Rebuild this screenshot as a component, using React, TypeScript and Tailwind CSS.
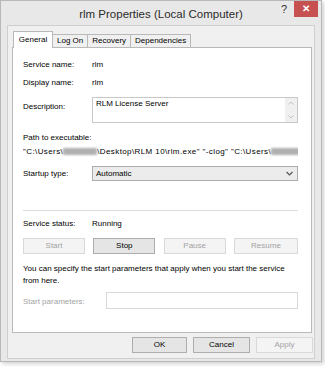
import React from "react";

const tabs = ["General", "Log On", "Recovery", "Dependencies"];

function Blur({ w }: { w: number }) {
  return (
    <span
      className="inline-block h-[7px] bg-[#b0b0b0] blur-[1px] align-middle"
      style={{ width: w }}
    />
  );
}

function Btn({ label, disabled, w = "w-[62px]" }: { label: string; disabled?: boolean; w?: string }) {
  return (
    <div
      className={
        "h-[16px] flex items-center justify-center border text-[8px] " +
        w +
        (disabled
          ? " border-[#d9d9d9] bg-[#f4f4f4] text-[#a3a3a3]"
          : " border-[#adadad] bg-[#e5e5e5] text-black")
      }
    >
      {label}
    </div>
  );
}

function Row({ label, children }: { label: string; children: React.ReactNode }) {
  return (
    <div className="flex items-center h-[12px]">
      <div className="w-[69px] shrink-0">{label}</div>
      <div>{children}</div>
    </div>
  );
}

export default function App() {
  return (
    <div className="w-[325px] h-[367px] bg-white font-['Liberation_Sans',Arial,sans-serif] text-[8px] text-black">
      <div className="w-[322px] h-[362px] flex flex-col bg-[#e8e8e8] border border-[#b8b8b8] shadow-[2px_2px_4px_rgba(0,0,0,0.18)]">
        {/* title bar */}
        <div className="h-[24px] flex items-start shrink-0">
          <div className="w-[44px]" />
          <div className="flex-1 text-center text-[11.5px] text-[#2b2b2b] pt-[6px] leading-[14px]">
            rlm Properties (Local Computer)
          </div>
          <div className="w-[44px] flex items-start justify-end pr-[3px]">
            <span className="text-[11px] leading-[12px] mt-[2px] mr-[7px] text-[#333]">?</span>
            <div className="w-[24px] h-[16px] bg-[#c75050] flex items-center justify-center text-white text-[10px] font-bold leading-none">
              ✕
            </div>
          </div>
        </div>

        {/* client area */}
        <div className="flex-1 mx-[6px] mb-[2px] bg-[#f0f0f0] border border-[#cfcfcf] pl-[4px] pt-[5px] flex flex-col">
          {/* tabs */}
          <div className="flex items-end h-[17px] pl-[1px] relative z-10 -mb-[1px]">
            {tabs.map((t, i) =>
              i === 0 ? (
                <div
                  key={t}
                  className="h-[17px] w-[40px] bg-white border border-b-0 border-[#b9b9b9] flex items-center justify-center pb-[1px]"
                >
                  {t}
                </div>
              ) : (
                <div
                  key={t}
                  className="h-[14px] px-[4px] bg-[#f0f0f0] border border-l-0 border-[#b9b9b9] flex items-center justify-center"
                >
                  {t}
                </div>
              )
            )}
          </div>

          {/* panel */}
          <div className="w-[300px] h-[286px] bg-white border border-[#b9b9b9] pl-[10px] pr-[13px] pt-[11px] flex flex-col">
            <Row label="Service name:">rlm</Row>
            <div className="mt-[6px]">
              <Row label="Display name:">rlm</Row>
            </div>

            <div className="mt-[8px] flex items-start">
              <div className="w-[69px] shrink-0 mt-[4px] leading-[12px]">Description:</div>
              <div className="flex-1 h-[26px] border border-[#c8c8c8] bg-white flex">
                <div className="flex-1 pl-[3px] pt-[1px] leading-[10px]">RLM License Server</div>
                <div className="w-[12px] bg-[#f0f0f0] flex flex-col items-center justify-between py-[3px]">
                  <svg width="6" height="4" viewBox="0 0 6 4">
                    <polyline points="0.5,3.5 3,1 5.5,3.5" fill="none" stroke="#c2c2c2" strokeWidth="1" />
                  </svg>
                  <svg width="6" height="4" viewBox="0 0 6 4">
                    <polyline points="0.5,0.5 3,3 5.5,0.5" fill="none" stroke="#c2c2c2" strokeWidth="1" />
                  </svg>
                </div>
              </div>
            </div>

            <div className="mt-[9px] h-[12px] leading-[12px]">Path to executable:</div>
            <div className="mt-[2px] h-[12px] leading-[12px] whitespace-nowrap overflow-hidden tracking-[0.4px]">
              {'"C:\\Users\\'}
              <Blur w={34} />
              {'\\Desktop\\RLM 10\\rlm.exe" "-clog" "C:\\Users\\'}
              <Blur w={30} />
            </div>

            <div className="mt-[8px] flex items-center h-[15px]">
              <div className="w-[69px] shrink-0">Startup type:</div>
              <div className="flex-1 h-[15px] border border-[#acacac] bg-[#ececec] flex items-center pl-[3px] pr-[4px]">
                <span className="flex-1">Automatic</span>
                <svg width="7" height="5" viewBox="0 0 7 5">
                  <polyline points="0.5,1 3.5,4 6.5,1" fill="none" stroke="#555" strokeWidth="1.2" />
                </svg>
              </div>
            </div>

            <div className="mt-[29px] h-px bg-[#dcdcdc]" />

            <div className="mt-[7px]">
              <Row label="Service status:">Running</Row>
            </div>

            <div className="mt-[8px] flex justify-between">
              <Btn label="Start" disabled />
              <Btn label="Stop" />
              <Btn label="Pause" disabled />
              <Btn label="Resume" disabled w="w-[64px]" />
            </div>

            <div className="mt-[9px] leading-[11.5px]">
              You can specify the start parameters that apply when you start the service from here.
            </div>

            <div className="mt-[6px] flex items-center">
              <div className="w-[83px] shrink-0 text-[#a3a3a3] pt-[2px]">Start parameters:</div>
              <div className="flex-1 h-[17px] border border-[#d9d9d9] bg-white" />
            </div>
          </div>

          {/* dialog buttons */}
          <div className="w-[301px] mt-[4px] flex justify-end gap-[6px]">
            <Btn label="OK" w="w-[55px]" />
            <Btn label="Cancel" w="w-[57px]" />
            <Btn label="Apply" disabled w="w-[57px]" />
          </div>
        </div>
      </div>
    </div>
  );
}
